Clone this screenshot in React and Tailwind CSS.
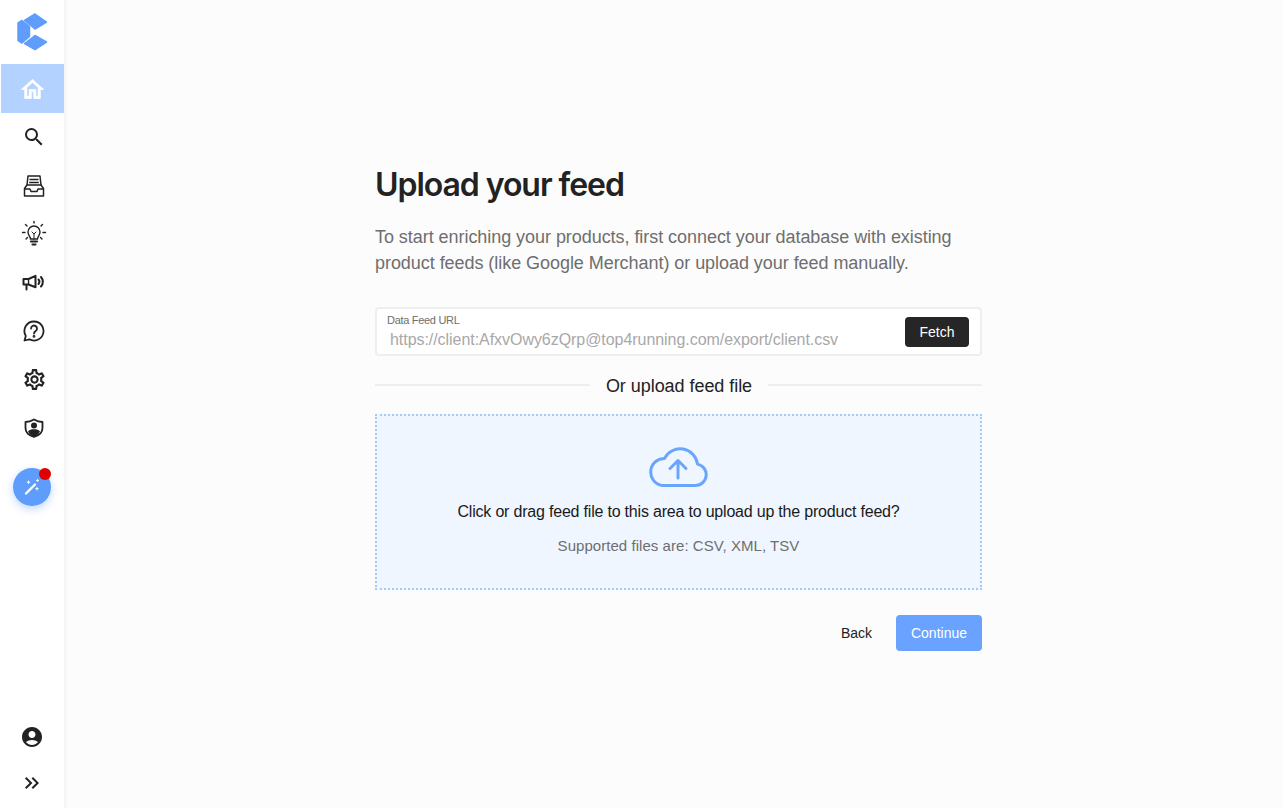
import React from 'react';
import { MdSearch, MdOutlineSettings, MdAccountCircle, MdKeyboardDoubleArrowRight } from 'react-icons/md';

const Logo = () => (
  <svg width="32" height="40" viewBox="16 12 32 40" fill="#5f9dfc" stroke="#5f9dfc" strokeWidth="1.5" strokeLinejoin="round">
    <polygon points="35,14 46.5,22 35,29 24.5,20.5" />
    <polygon points="18,23 22,20.5 29.5,26.5 29.5,36.5 22,43 18,40.5" />
    <polygon points="24.5,43.5 35,35.5 46.5,42 35,49.5" />
  </svg>
);

const HomeIcon = () => (
  <svg width="27" height="27" viewBox="0 0 24 24" fill="#fff" stroke="#fff" strokeWidth="0.6">
    <path d="M12 5.69l5 4.5V18h-2v-6H9v6H7v-7.81l5-4.5M12 3L2 12h3v8h6v-6h2v6h6v-8h3L12 3z" />
  </svg>
);

const InboxIcon = () => (
  <svg width="22" height="24" viewBox="0 0 22 24" fill="none" stroke="#222" strokeWidth="1.5" strokeLinejoin="round">
    <path d="M4 11L5 2h12l1 9" />
    <path d="M6.5 5.5h9M6.2 8.5h9.6" />
    <path d="M4 11L1.5 14.5V22h19v-7.5L18 11z" />
    <path d="M1.5 15H7l1 2.5h6l1-2.5h5.5" />
  </svg>
);

const BulbIcon = () => (
  <svg width="26" height="28" viewBox="0 0 26 28" fill="none" stroke="#222" strokeWidth="1.4" strokeLinecap="round">
    <path d="M9.5 19c0-2.500-2.500-3.500-2.500-7a6 6 0 0 1 12 0c0 3.500-2.500 4.500-2.500 7z" />
    <path d="M11 12l2 2 2-2M13 14v5" strokeWidth="1" />
    <path d="M10 21.500h6M11.500 24.500h3" strokeWidth="2.2" />
    <path d="M13 1.500V3M4.500 4.500L6 6M21.500 4.500L20 6M1.500 12.500H4M22 12.500h2.500M5 19l1.500-1.500M21 19l-1.500-1.500" />
  </svg>
);

const MegaphoneIcon = () => (
  <svg width="24" height="18" viewBox="0 0 24 18" fill="none" stroke="#222" strokeWidth="2" strokeLinejoin="round" strokeLinecap="round">
    <path d="M1.5 5h5l7-3.200v11.400l-7-2.700h-5z" />
    <path d="M4.500 11v4.500" />
    <path d="M6.500 5v5.500" strokeWidth="1.4" />
    <path d="M16.500 5.500a3.500 3.500 0 0 1 0 4.500M19 3a7 7 0 0 1 0 9.500" />
  </svg>
);

const HelpIcon = () => (
  <svg width="22" height="22" viewBox="0 0 22 22" fill="none" stroke="#222" strokeWidth="1.8" strokeLinecap="round" strokeLinejoin="round">
    <path d="M11 1.500a9.500 9.500 0 1 1-4.600 17.800L1.500 20.500l1.300-4.600A9.500 9.500 0 0 1 11 1.500z" />
    <path d="M8 8.500a3 3 0 1 1 4.700 2.500c-1 .7-1.700 1.200-1.700 2.500" />
    <circle cx="11" cy="16.400" r="0.5" fill="#222" />
  </svg>
);

const ShieldIcon = () => (
  <svg width="20" height="20" viewBox="0 0 20 20">
    <path d="M10 1.500c2.500 1.500 5.500 2.500 8.500 2.500v6c0 4.500-3.500 7.500-8.500 9C5 17.500 1.500 14.500 1.500 10V4c3 0 6-1 8.500-2.500z" fill="none" stroke="#222" strokeWidth="1.8" strokeLinejoin="round" />
    <circle cx="10" cy="7.500" r="3" fill="#222" />
    <path d="M4 13.500c1-1.800 3.500-2.300 6-2.300s5 .5 6 2.300c-1.500 3-3.500 4.500-6 5.500-2.500-1-4.500-2.500-6-5.500z" fill="#222" />
  </svg>
);

const WandIcon = () => (
  <svg width="18" height="18" viewBox="0 0 18 18" fill="none" stroke="#fff" strokeLinecap="round">
    <path d="M3 15.500L12 6.500" strokeWidth="2.4" />
    <path d="M5.500 3v2.500M4.200 4.200h2.600M14 9.500v2.500M12.700 10.700h2.600M14.500 1.500v2M13.500 2.500h2" strokeWidth="1" />
  </svg>
);

const CloudIcon = () => (
  <svg width="60" height="44" viewBox="0 0 60 44" fill="none" stroke="#6aa5fd" strokeWidth="3" strokeLinecap="round" strokeLinejoin="round">
    <path d="M13 41.500H46.500a10.800 10.800 0 0 0 2-21.400A17.500 17.500 0 0 0 15.500 14.500 13.600 13.600 0 0 0 13 41.500z" />
    <path d="M29 34V17M21 24.500l8-8 8 8" />
  </svg>
);

const navItems = [
  <MdSearch size={24} color="#222" />,
  <InboxIcon />,
  <BulbIcon />,
  <MegaphoneIcon />,
  <HelpIcon />,
  <MdOutlineSettings size={25} color="#222" />,
  <ShieldIcon />,
];

const Sidebar = () => (
  <aside className="flex h-[808px] w-[64px] shrink-0 flex-col bg-white shadow-[1px_0_4px_rgba(0,0,0,0.06)]">
    <div className="flex h-[64px] items-center justify-center">
      <Logo />
    </div>
    <div className="ml-px flex h-[49px] items-center justify-center bg-[#b3d2ff] pt-px">
      <HomeIcon />
    </div>
    {navItems.map((icon, i) => (
      <div key={i} className="flex h-[48.5px] items-center justify-center pl-[4px]">
        {icon}
      </div>
    ))}
    <div className="mt-[15px] flex justify-center">
      <div className="relative flex h-[38px] w-[38px] items-center justify-center rounded-full bg-[#5f9dfc] shadow-[0_3px_8px_rgba(95,157,252,0.4)]">
        <WandIcon />
        <span className="absolute right-0 top-0 h-[12px] w-[12px] rounded-full bg-[#e00000]" />
      </div>
    </div>
    <div className="mt-auto flex flex-col items-center pb-[13px]">
      <MdAccountCircle size={24} color="#222" />
      <div className="mt-[22px]">
        <MdKeyboardDoubleArrowRight size={24} color="#222" />
      </div>
    </div>
  </aside>
);

const App = () => (
  <div className="flex h-[808px] w-[1283px] overflow-hidden bg-[#fcfcfc] font-['Liberation_Sans',sans-serif] text-[#222]">
    <Sidebar />
    <main className="ml-[311px] w-[607px] pt-[165px]">
      <h1 className="font-['Inter',sans-serif] text-[32px] font-semibold leading-[40px] tracking-[-1.05px] text-[#222]">Upload your feed</h1>
      <p className="mt-[19px] text-[18px] leading-[26px] tracking-[-0.05px] text-[#6e6e6e]">
        To start enriching your products, first connect your database with existing product feeds (like Google Merchant) or upload your feed manually.
      </p>

      <div className="mt-[31px] flex h-[49px] items-center justify-between rounded border-2 border-[#eeeeee] bg-white pl-[10px] pr-[11px]">
        <div className="flex flex-col pt-px">
          <span className="text-[11px] leading-[13px] tracking-[-0.3px] text-[#6e6e6e]">Data Feed URL</span>
          <span className="mt-[3px] pl-[3px] text-[16px] leading-[20px] tracking-[-0.05px] text-[#a8a8a8]">https://client:AfxvOwy6zQrp@top4running.com/export/client.csv</span>
        </div>
        <button className="flex h-[30px] w-[64px] items-center justify-center rounded bg-[#262626] pt-px text-[14px] text-white">Fetch</button>
      </div>

      <div className="mt-[16px] flex h-[26px] items-center justify-between">
        <div className="h-[2px] w-[215px] bg-[#eeeeee]" />
        <span className="pt-[2px] text-[18px] leading-[26px] tracking-[-0.05px] text-[#222]">Or upload feed file</span>
        <div className="h-[2px] w-[214px] bg-[#eeeeee]" />
      </div>

      <div className="mt-[16px] flex h-[176px] flex-col items-center border-2 border-dotted border-[#a5c9fd] bg-[#f0f6ff] pt-[28px]">
        <CloudIcon />
        <p className="mt-[12px] text-[16px] leading-[24px] tracking-[-0.2px] text-[#1a1a1a]">Click or drag feed file to this area to upload up the product feed?</p>
        <p className="mt-[10px] text-[15px] leading-[24px] tracking-[0.05px] text-[#6e6e6e]">Supported files are: CSV, XML, TSV</p>
      </div>

      <div className="mt-[25px] flex items-center justify-end">
        <button className="mr-[24px] text-[14px] text-[#222]">Back</button>
        <button className="flex h-[36px] w-[86px] items-center justify-center rounded bg-[#69a3ff] text-[14px] text-white">Continue</button>
      </div>
    </main>
  </div>
);

export default App;
